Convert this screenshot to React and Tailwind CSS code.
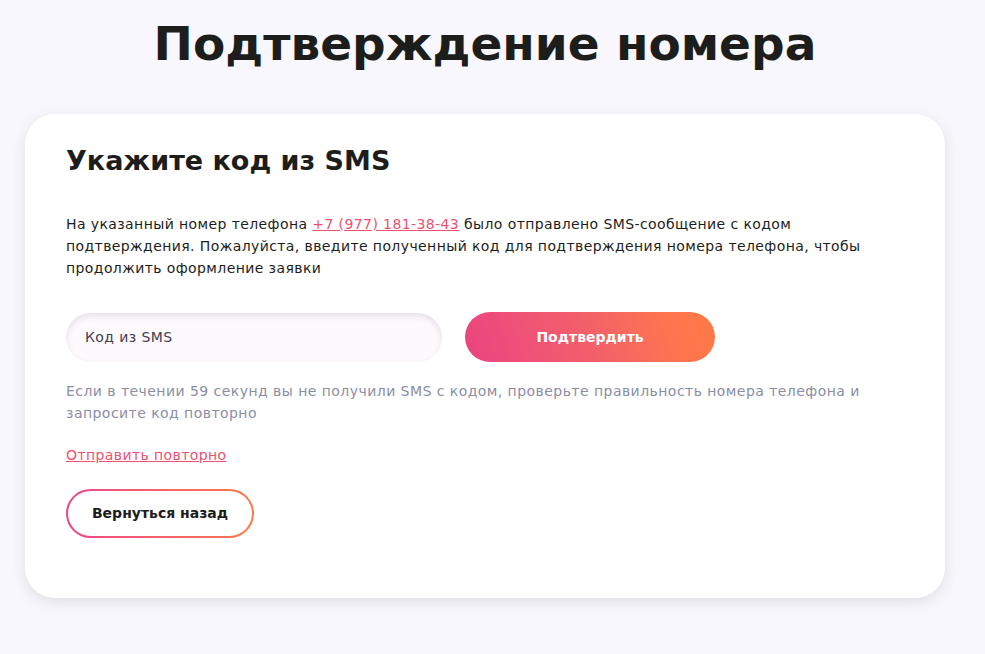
export default function App() {
  return (
    <div className="min-h-[654px] w-full bg-[#f7f7fd] font-['DejaVu_Sans',sans-serif] text-[#1d1d1b]">
      <div className="ml-[25px] w-[920px]">
        <h1 className="pt-[14px] text-center text-[47px] font-bold leading-[60px]">
          Подтверждение номера
        </h1>
        <div className="mt-[40px] rounded-[30px] bg-white px-[41px] pb-[60px] pt-[31px] shadow-[0_4px_14px_rgba(60,50,60,0.12)]">
          <h2 className="text-[27px] font-bold leading-[32px]">Укажите код из SMS</h2>
          <p className="mt-[36px] max-w-[820px] text-[14px] leading-[22px] tracking-[0.4px]">
            На указанный номер телефона{' '}
            <a href="#" className="text-[#f0506e] underline">+7 (977) 181-38-43</a>{' '}
            было отправлено SMS-сообщение с кодом подтверждения. Пожалуйста, введите полученный код для подтверждения номера телефона, чтобы продолжить оформление заявки
          </p>
          <div className="mt-[33px] flex items-center gap-[23px]">
            <input
              type="text"
              placeholder="Код из SMS"
              className="h-[49px] w-[376px] rounded-full bg-[#fdf9fd] px-[19px] text-[14px] tracking-[0.4px] placeholder:text-[#3f3d50] shadow-[inset_0_3px_6px_rgba(60,50,80,0.12)] outline-none"
            />
            <button
              type="button"
              className="h-[50px] w-[250px] rounded-full bg-[linear-gradient(70deg,#e9447f_0%,#ef4f7a_20%,#f2606a_50%,#ff7450_80%,#ff7a45_100%)] text-[14px] font-bold text-white"
            >
              Подтвердить
            </button>
          </div>
          <p className="mt-[18px] max-w-[820px] text-[14px] leading-[22px] tracking-[0.45px] text-[#8a8ea5]">
            Если в течении 59 секунд вы не получили SMS с кодом, проверьте правильность номера телефона и запросите код повторно
          </p>
          <a href="#" className="mt-[20px] inline-block text-[14px] leading-[22px] tracking-[0.4px] text-[#f0506e] underline">
            Отправить повторно
          </a>
          <div className="mt-[22px]">
            <div className="inline-block rounded-full bg-gradient-to-r from-[#ec4585] to-[#ff7a45] p-[2px]">
              <button type="button" className="h-[45px] w-[184px] rounded-full bg-white text-[14px] font-bold text-[#1d1d1b]">
                Вернуться назад
              </button>
            </div>
          </div>
        </div>
      </div>
    </div>
  )
}
